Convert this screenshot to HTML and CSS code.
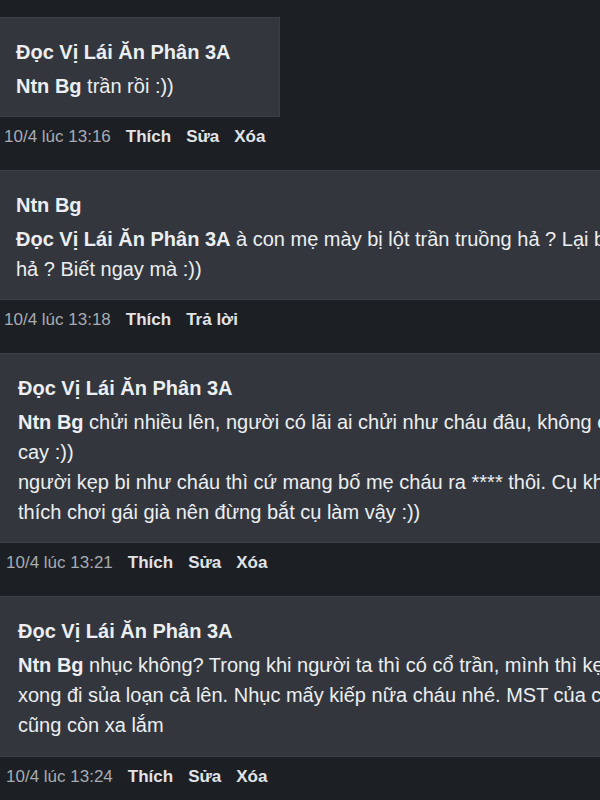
FILE: index.html
```html
<!DOCTYPE html>
<html lang="vi">
<head>
    <meta charset="UTF-8">
    <meta name="viewport" content="width=device-width, initial-scale=1.0">
    <title>Bình luận</title>
    <link rel="stylesheet" href="styles.css">
</head>
<body>

    <div class="commentList">

        <div class="comment">
            <div class="bubble bubbleSmall">
                <div class="author">Đọc Vị Lái Ăn Phân 3A</div>
                <div class="text"><b>Ntn Bg</b> trần rồi :))</div>
            </div>
            <div class="actions">
                <span class="time">10/4 lúc 13:16</span>
                <span class="link">Thích</span>
                <span class="link">Sửa</span>
                <span class="link">Xóa</span>
            </div>
        </div>

        <div class="comment">
            <div class="bubble">
                <div class="author">Ntn Bg</div>
                <div class="text"><b>Đọc Vị Lái Ăn Phân 3A</b> à con mẹ mày bị lột trần truồng hả ? Lại bị<br>hả ? Biết ngay mà :))</div>
            </div>
            <div class="actions">
                <span class="time">10/4 lúc 13:18</span>
                <span class="link">Thích</span>
                <span class="link">Trả lời</span>
            </div>
        </div>

        <div class="comment shifted">
            <div class="bubble">
                <div class="author">Đọc Vị Lái Ăn Phân 3A</div>
                <div class="text"><b>Ntn Bg</b> chửi nhiều lên, người có lãi ai chửi như cháu đâu, không có<br>cay :))<br>người kẹp bi như cháu thì cứ mang bố mẹ cháu ra **** thôi. Cụ không<br>thích chơi gái già nên đừng bắt cụ làm vậy :))</div>
            </div>
            <div class="actions">
                <span class="time">10/4 lúc 13:21</span>
                <span class="link">Thích</span>
                <span class="link">Sửa</span>
                <span class="link">Xóa</span>
            </div>
        </div>

        <div class="comment shifted">
            <div class="bubble bubbleLast">
                <div class="author">Đọc Vị Lái Ăn Phân 3A</div>
                <div class="text"><b>Ntn Bg</b> nhục không? Trong khi người ta thì có cổ trần, mình thì kẹp<br>xong đi sủa loạn cả lên. Nhục mấy kiếp nữa cháu nhé. MST của cháu<br>cũng còn xa lắm</div>
            </div>
            <div class="actions">
                <span class="time">10/4 lúc 13:24</span>
                <span class="link">Thích</span>
                <span class="link">Sửa</span>
                <span class="link">Xóa</span>
            </div>
        </div>

    </div>

</body>
</html>
```

FILE: styles.css
```css
* {
    margin: 0;
    padding: 0;
    box-sizing: border-box;
}

html, body {
    overflow: hidden;
}

body {
    background-color: #1c1f24;
    font-family: "Liberation Sans", Arial, sans-serif;
    color: #eceef1;
    height: 800px;
}

.commentList {
    padding-top: 17px;
    width: 600px;
    overflow: hidden;
}

.comment {
    margin-bottom: 14px;
}

.bubble {
    width: 800px;
    background-color: #33373d;
    border: 1px solid #3b3f46;
    border-left: none;
    padding: 19px 16px 15px 16px;
    white-space: nowrap;
}

.bubbleSmall {
    width: 280px;
}

.bubbleLast {
    padding-bottom: 16px;
}

.author {
    font-size: 20px;
    font-weight: bold;
    line-height: 30px;
    margin-bottom: 4px;
}

.text {
    font-size: 20px;
    line-height: 30px;
}

.actions {
    display: flex;
    align-items: center;
    gap: 15px;
    height: 39px;
    padding-left: 4px;
    font-size: 17px;
}

.time {
    color: #a8abb1;
}

.link {
    color: #e1e3e7;
    font-weight: bold;
}

.shifted .bubble {
    padding-left: 18px;
}

.shifted .actions {
    padding-left: 6px;
}
```
